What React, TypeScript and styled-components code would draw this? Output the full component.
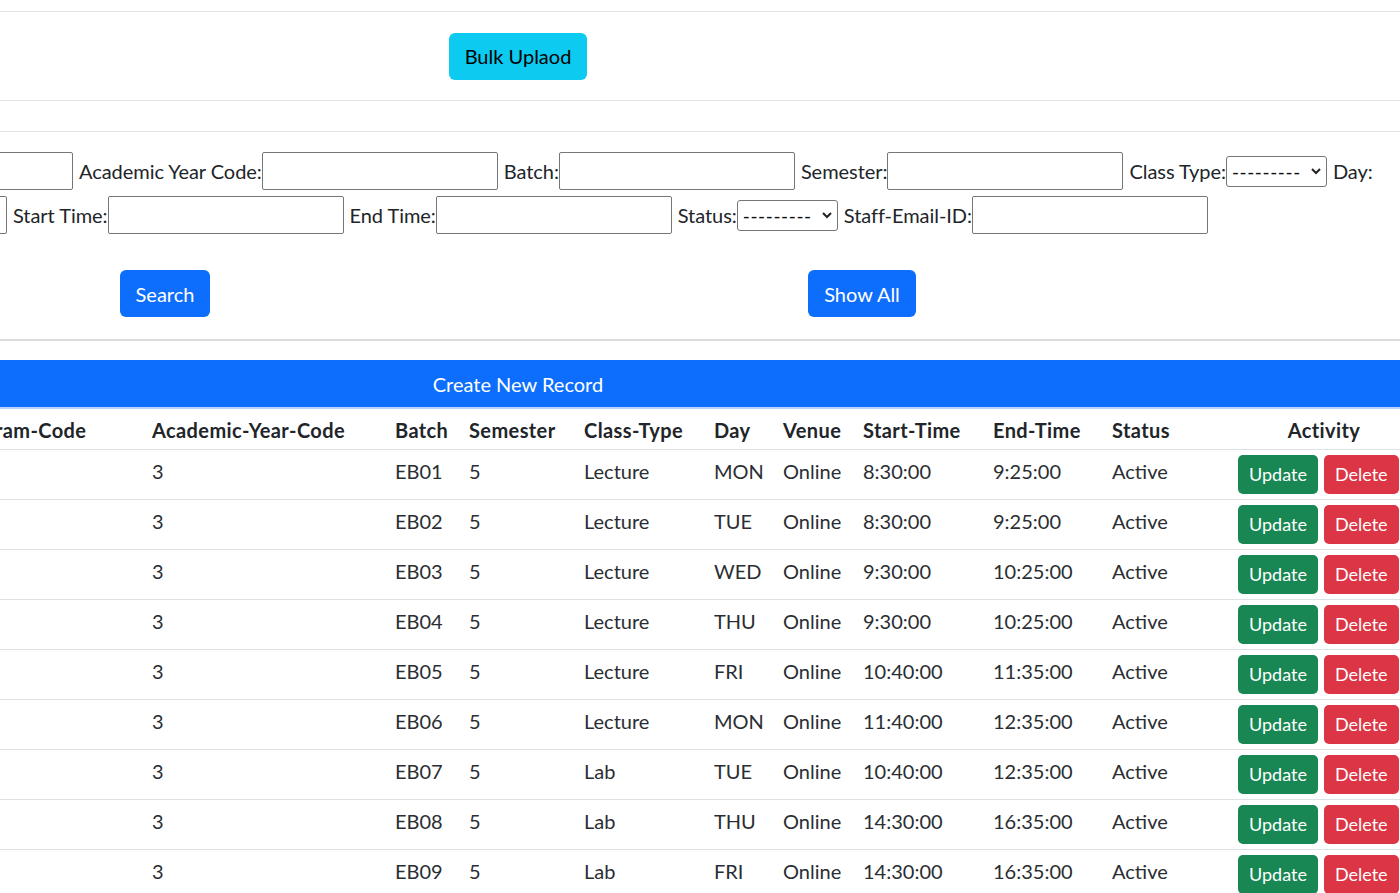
import React from "react";
import styled, { createGlobalStyle } from "styled-components";

const GlobalStyle = createGlobalStyle`
  html, body { margin: 0; padding: 0; background: #fff; }
  body {
    font-family: Lato, "Open Sans", "Liberation Sans", sans-serif;
    font-size: 20px;
    color: #212529;
  }
  * { box-sizing: border-box; }
`;

const Viewport = styled.div`
  width: 100%;
  height: 893px;
  overflow: hidden;
`;

/* the page is scrolled horizontally: its left part lies out of view */
const Frame = styled.div`
  margin-left: -188px;
  width: 1412px;
`;

const Rule = styled.div<{ $top?: number; $thick?: number; $color?: string }>`
  margin-top: ${(p) => p.$top ?? 0}px;
  margin-right: -400px;
  border-top: ${(p) => p.$thick ?? 1}px solid ${(p) => p.$color ?? "#e3e3e3"};
`;

const UploadSection = styled.div`
  height: 88px;
  display: flex;
  align-items: center;
  justify-content: center;
`;

const Btn = styled.button<{ $variant: "info" | "primary" | "success" | "danger"; $small?: boolean }>`
  font-family: inherit;
  font-size: ${(p) => (p.$small ? 18 : 20)}px;
  line-height: ${(p) => (p.$small ? 29 : 30)}px;
  padding: ${(p) => (p.$small ? "4px 10px" : "7.5px 15px")};
  border-radius: ${(p) => (p.$small ? 5 : 6)}px;
  border: 1px solid transparent;
  cursor: pointer;
  background: ${(p) =>
    p.$variant === "info"
      ? "#0dcaf0"
      : p.$variant === "primary"
      ? "#0d6efd"
      : p.$variant === "success"
      ? "#198754"
      : "#dc3545"};
  color: ${(p) => (p.$variant === "info" ? "#000" : "#fff")};
`;

const FilterBlock = styled.div`
  padding-top: 20px;
  display: flex;
  flex-direction: column;
  gap: 6px;
`;

const FilterRow = styled.div<{ $indent: number }>`
  display: flex;
  align-items: center;
  height: 38px;
  margin-left: ${(p) => p.$indent}px;
  white-space: nowrap;
`;

const FieldLabel = styled.label`
  margin-left: 6px;
  letter-spacing: -0.05px;
  color: #212529;
`;

const TextInput = styled.input`
  width: 236px;
  height: 38px;
  flex: none;
  border: 1px solid #767676;
  border-radius: 2px;
  font-family: inherit;
  font-size: 20px;
  padding: 0 4px;
  background: #fff;
`;

const SelectWrap = styled.span`
  position: relative;
  display: inline-flex;
  flex: none;
`;

const SelectBox = styled.select`
  appearance: none;
  -webkit-appearance: none;
  width: 101px;
  height: 31px;
  border: 1px solid #767676;
  border-radius: 3px;
  background: #fff;
  color: #111;
  font-family: inherit;
  font-size: 19px;
  padding: 0 0 0 5px;
  letter-spacing: 0.6px;
`;

const Chevron = styled.svg`
  position: absolute;
  right: 6px;
  top: 50%;
  margin-top: -3px;
  pointer-events: none;
`;

const ButtonGrid = styled.div`
  display: grid;
  grid-template-columns: 706px 688px;
  justify-items: center;
  margin-top: 36px;
  padding-bottom: 22px;
`;

const BlueBar = styled.div`
  margin-top: 19px;
  margin-right: -400px;
  padding-right: 400px;
  height: 49px;
  background: #0d6efd;
  border-bottom: 2px solid #b9d5fd;
  color: #fff;
  display: flex;
  align-items: center;
  justify-content: center;
`;

const Table = styled.table`
  margin-left: 130px;
  width: 1478px;
  table-layout: fixed;
  border-collapse: collapse;
`;

const Th = styled.th<{ $center?: boolean }>`
  font-weight: 700;
  letter-spacing: 0.4px;
  text-align: ${(p) => (p.$center ? "center" : "left")};
  padding: 6px 10px 4px;
  line-height: 30px;
  border-bottom: 1px solid #dee2e6;
  white-space: nowrap;
`;

const Td = styled.td`
  padding: 5px 10px;
  line-height: 32px;
  height: 50px;
  border-bottom: 1px solid #dee2e6;
  white-space: nowrap;
  vertical-align: top;
  color: #2a2e33;
`;

const Actions = styled.div`
  display: flex;
  gap: 6px;
`;

const cols = [200, 243, 74, 115, 130, 69, 80, 130, 119, 126, 192];
const heads = [
  "Program-Code",
  "Academic-Year-Code",
  "Batch",
  "Semester",
  "Class-Type",
  "Day",
  "Venue",
  "Start-Time",
  "End-Time",
  "Status",
];

const rows = [
  ["EB01", "Lecture", "MON", "8:30:00", "9:25:00"],
  ["EB02", "Lecture", "TUE", "8:30:00", "9:25:00"],
  ["EB03", "Lecture", "WED", "9:30:00", "10:25:00"],
  ["EB04", "Lecture", "THU", "9:30:00", "10:25:00"],
  ["EB05", "Lecture", "FRI", "10:40:00", "11:35:00"],
  ["EB06", "Lecture", "MON", "11:40:00", "12:35:00"],
  ["EB07", "Lab", "TUE", "10:40:00", "12:35:00"],
  ["EB08", "Lab", "THU", "14:30:00", "16:35:00"],
  ["EB09", "Lab", "FRI", "14:30:00", "16:35:00"],
];

function Select() {
  return (
    <SelectWrap>
      <SelectBox defaultValue="">
        <option value="">---------</option>
      </SelectBox>
      <Chevron width="10" height="7" viewBox="0 0 10 7">
        <polyline points="1,1 5,5 9,1" fill="none" stroke="#222" strokeWidth="2" />
      </Chevron>
    </SelectWrap>
  );
}

export default function App() {
  return (
    <Viewport>
      <GlobalStyle />
      <Frame>
        <Rule $top={11} />
        <UploadSection>
          <Btn $variant="info">Bulk Uplaod</Btn>
        </UploadSection>
        <Rule />
        <Rule $top={30} />
        <FilterBlock>
          <FilterRow $indent={25}>
            <TextInput />
            <FieldLabel>Academic Year Code:</FieldLabel>
            <TextInput />
            <FieldLabel>Batch:</FieldLabel>
            <TextInput />
            <FieldLabel>Semester:</FieldLabel>
            <TextInput />
            <FieldLabel>Class Type:</FieldLabel>
            <Select />
            <FieldLabel>Day:</FieldLabel>
          </FilterRow>
          <FilterRow $indent={-41}>
            <TextInput />
            <FieldLabel>Start Time:</FieldLabel>
            <TextInput />
            <FieldLabel>End Time:</FieldLabel>
            <TextInput />
            <FieldLabel>Status:</FieldLabel>
            <Select />
            <FieldLabel>Staff-Email-ID:</FieldLabel>
            <TextInput />
          </FilterRow>
        </FilterBlock>
        <ButtonGrid>
          <Btn $variant="primary">Search</Btn>
          <Btn $variant="primary">Show All</Btn>
        </ButtonGrid>
        <Rule $thick={2} $color="#dcdcdc" />
        <BlueBar>Create New Record</BlueBar>
        <Table>
          <colgroup>
            {cols.map((w, i) => (
              <col key={i} style={{ width: w }} />
            ))}
          </colgroup>
          <thead>
            <tr>
              {heads.map((h) => (
                <Th key={h}>{h}</Th>
              ))}
              <Th $center>Activity</Th>
            </tr>
          </thead>
          <tbody>
            {rows.map((r) => (
              <tr key={r[0]}>
                <Td></Td>
                <Td>3</Td>
                <Td>{r[0]}</Td>
                <Td>5</Td>
                <Td>{r[1]}</Td>
                <Td>{r[2]}</Td>
                <Td>Online</Td>
                <Td>{r[3]}</Td>
                <Td>{r[4]}</Td>
                <Td>Active</Td>
                <Td>
                  <Actions>
                    <Btn $variant="success" $small>Update</Btn>
                    <Btn $variant="danger" $small>Delete</Btn>
                  </Actions>
                </Td>
              </tr>
            ))}
          </tbody>
        </Table>
      </Frame>
    </Viewport>
  );
}
